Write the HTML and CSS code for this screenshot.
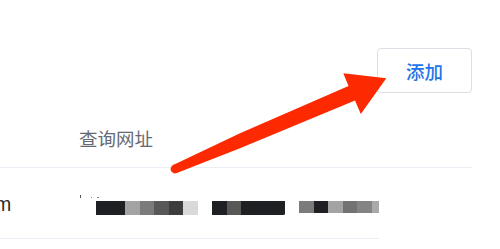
FILE: index.html
```html
<!DOCTYPE html>
<html lang="zh-CN">
<head>
<meta charset="utf-8">
<title>查询网址</title>
<link rel="stylesheet" href="styles.css">
</head>
<body>
<div class="page">
  <div class="toolbar">
    <button class="btn">添加</button>
  </div>
  <div class="table">
    <div class="thead">
      <div class="col1"></div>
      <div class="th">查询网址</div>
    </div>
    <div class="tr">
      <div class="col1 cell-name"><span class="name">m</span></div>
      <div class="cell-url">
        <div class="dots"><span class="tick"></span><span class="dot d2"></span><span class="dot d3"></span></div>
        <div class="mosaic">
          <span class="c k w2"></span><span class="c g1"></span><span class="c g2"></span><span class="c g3"></span><span class="c g4"></span><span class="c g5"></span>
          <span class="c"></span>
          <span class="c k"></span><span class="c g3"></span><span class="c k w3 notch"></span>
          <span class="c"></span>
          <span class="c s g2"></span><span class="c s k"></span><span class="c s g1"></span><span class="c s g6"></span><span class="c s g7"></span><span class="c s g8 half"></span>
        </div>
      </div>
    </div>
  </div>
</div>
<svg class="arrow" width="500" height="249" viewBox="0 0 500 249" aria-hidden="true">
  <circle cx="175" cy="169" r="4.4" fill="#fd2900"/>
  <polygon fill="#fd2900" points="173.2,164.9 240,133.3 348.5,86 343.3,73.3 386.3,78.2 360.8,114 355,100.4 240,148.3 176.8,173.1"/>
</svg>
</body>
</html>
```
FILE: styles.css
```css
html, body {
  margin: 0;
  padding: 0;
  background: #ffffff;
}
body {
  width: 500px;
  height: 249px;
  overflow: hidden;
  position: relative;
  font-family: "Noto Sans CJK SC", "Noto Sans", sans-serif;
}
.page {
  padding-top: 48px;
}
.toolbar {
  display: flex;
  justify-content: flex-end;
  padding-right: 28px;
}
.btn {
  width: 95px;
  height: 45px;
  box-sizing: border-box;
  border: 1px solid #dcdfe6;
  border-radius: 4px;
  background: #fff;
  color: #1e74e8;
  font-family: "Noto Sans CJK SC", sans-serif;
  font-size: 18.5px;
  font-weight: 500;
  display: flex;
  align-items: center;
  justify-content: center;
  padding: 0;
}
.table {
  margin-top: 15px;
}
.thead {
  width: 472px;
  height: 60px;
  box-sizing: border-box;
  border-bottom: 1px solid #ebeef5;
  display: flex;
  align-items: center;
}
.col1 {
  width: 79px;
  flex: none;
}
.th {
  color: #666a70;
  font-size: 18.5px;
  line-height: 1;
  padding-top: 1px;
}
.tr {
  width: 379px;
  height: 71px;
  box-sizing: border-box;
  border-bottom: 1px solid #ebeef5;
  display: flex;
  align-items: flex-start;
}
.cell-name {
  overflow: hidden;
  padding-top: 25px;
}
.name {
  display: block;
  margin-left: -5px;
  font-family: "Liberation Sans", Arial, sans-serif;
  font-size: 19.5px;
  line-height: 22px;
  color: #2a2b2e;
}
.cell-url {
  flex: 1;
  padding-top: 27px;
}
.dots {
  height: 3px;
  display: flex;
  align-items: flex-start;
  position: relative;
}
.tick {
  width: 1.2px;
  height: 3px;
  background: #555;
  margin-left: 1px;
}
.dot {
  width: 1.4px;
  height: 1.4px;
  margin-top: 2px;
  background: #888;
}
.d2 { margin-left: 9.5px; }
.d3 { margin-left: 5.2px; }
.mosaic {
  margin-top: 3px;
  margin-left: 17px;
  display: flex;
  align-items: flex-start;
  height: 14px;
}
.c {
  display: block;
  width: 14.5px;
  height: 14px;
  flex: none;
}
.c.s { height: 12.3px; }
.w2 { width: 29px; }
.w3 { width: 43.5px; }
.half { width: 7px; }
.notch { border-bottom-right-radius: 2px 1px; }
.k { background: #1f2023; }
.g1 { background: #a3a3a3; }
.g2 { background: #7b7b7b; }
.g3 { background: #585858; }
.g4 { background: #3d3d3d; }
.g5 { background: #d9d9d9; }
.g6 { background: #727272; }
.g7 { background: #848484; }
.g8 { background: #a9a9a9; }
.arrow {
  position: absolute;
  left: 0;
  top: 0;
  pointer-events: none;
}
```
